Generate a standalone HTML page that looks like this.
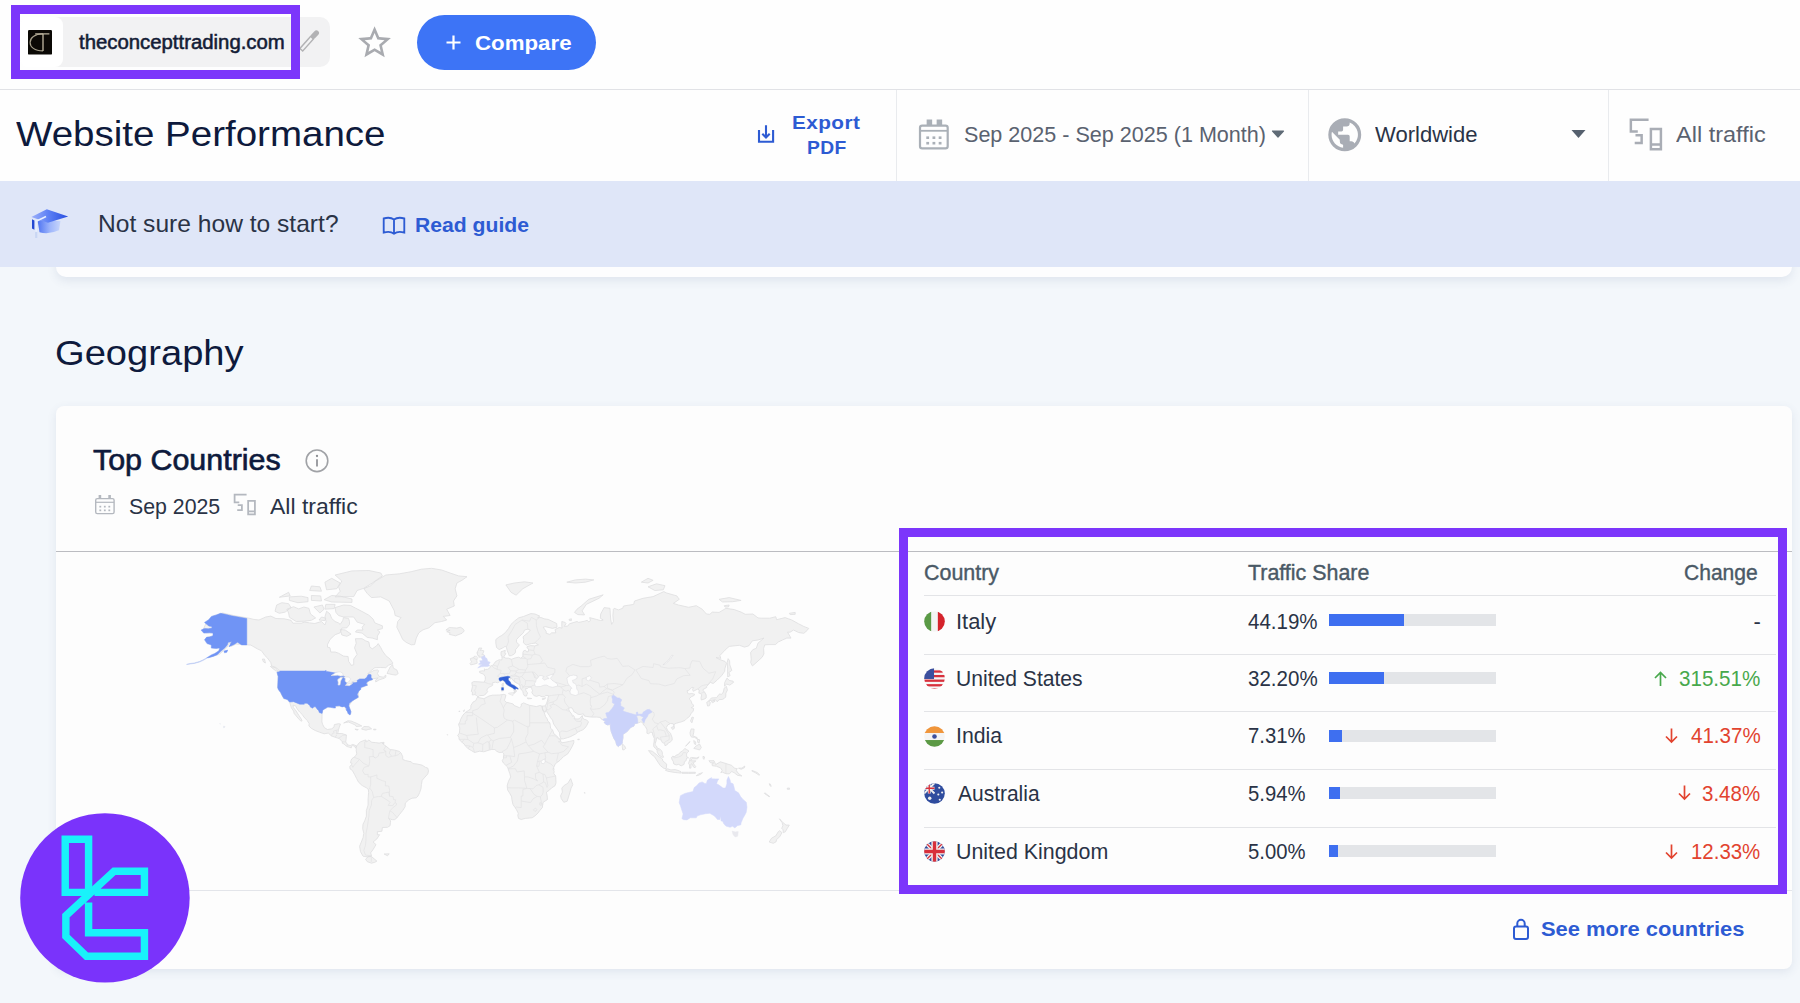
<!DOCTYPE html>
<html lang="en">
<head>
<meta charset="utf-8">
<title>Website Performance</title>
<style>
*{box-sizing:border-box;margin:0;padding:0}
html,body{width:1800px;height:1003px;overflow:hidden}
body{position:relative;background:#f3f7fb;font-family:"Liberation Sans",sans-serif;color:#1b2653}
.abs{position:absolute}
.t{position:absolute;white-space:nowrap;line-height:1;transform-origin:0 50%}
.t.r{transform-origin:100% 50%}
#topbar{left:0;top:0;width:1800px;height:90px;background:#fefefe;border-bottom:1px solid #e1e2e6}
#bar2{left:0;top:90px;width:1800px;height:91px;background:#fefefe}
.vd{position:absolute;top:90px;width:1px;height:91px;background:#e9ebee}
#banner{left:0;top:181px;width:1800px;height:86px;background:#dfe6f8}
#prevcard{left:56px;top:250px;width:1736px;height:27px;background:#fdfdfe;border-radius:0 0 10px 10px;box-shadow:0 4px 10px rgba(60,80,130,.10)}
#card{left:56px;top:406px;width:1736px;height:563px;background:#fdfdfd;border-radius:8px;box-shadow:0 3px 10px rgba(60,80,130,.10)}
.hl{position:absolute;height:1px}
.purple{position:absolute;border:9px solid #7c36fb}
.th{font-size:22px;color:#4a5966;-webkit-text-stroke:0.4px #4a5966}
.td{font-size:22px;color:#2a3346}
.td.red{color:#e2432f}.td.green{color:#48a84c}
.bar{position:absolute;left:1329px;width:167px;height:12px;background:#e3e5e8}
.bar i{position:absolute;left:0;top:0;height:12px;background:#3e6ff0;display:block}
.chg{position:absolute;right:41px;white-space:nowrap;line-height:1;font-size:22px}
.red{color:#e2432f}.green{color:#48a84c}
</style>
<style id="fit"></style>
</head>
<body>
<!-- top bar -->
<div id="topbar" class="abs"></div>
<div id="bar2" class="abs"></div>
<div class="vd" style="left:896px"></div>
<div class="vd" style="left:1308px"></div>
<div class="vd" style="left:1608px"></div>
<div id="prevcard" class="abs"></div>
<div id="banner" class="abs"></div>
<div id="card" class="abs"></div>

<!-- domain pill -->
<div class="abs" style="left:20px;top:17px;width:310px;height:50px;background:#f2f2f3;border-radius:10px"></div>
<div class="abs" style="left:20px;top:17px;width:43px;height:50px;background:#fff;border-radius:8px"></div>
<svg class="abs" style="left:28px;top:30.100px" width="24" height="24.600" viewBox="0 0 24 24.600"><rect width="24" height="24.600" rx="1.200" fill="#0b0905"/><path d="M15 3.900C6.500 3.900 2.100 8 2.100 12.400C2.100 17 6.500 20.900 15 20.900" fill="none" stroke="#a69f8a" stroke-width="1.150"/><path d="M7.200 3.900H21.400M15 3.900V21" fill="none" stroke="#bcb49e" stroke-width="1.350"/></svg>
<div class="t" id="domain" style="left:78.53px;top:31.50px;font-size:20px;-webkit-text-stroke:0.55px #141c36;color:#141c36;transform:scaleX(1.0169)">theconcepttrading.com</div>
<svg class="abs" style="left:296px;top:28px" width="28" height="28" viewBox="296 28 28 28"><path d="M300.800 50.300L312.400 37.300" stroke="#b2b2b4" stroke-width="5.200" stroke-linecap="butt"/><path d="M301.800 49.200L312 37.700" stroke="#f3f3f4" stroke-width="2.400"/><path d="M313.300 36.300L316.400 32.900" stroke="#b2b2b4" stroke-width="5.200" stroke-linecap="round"/></svg>
<div class="purple" style="left:11px;top:5px;width:289px;height:74px"></div>
<svg class="abs" style="left:354.800px;top:23.400px" width="39.200" height="39.200" viewBox="0 0 24 24"><path fill="#a9abb0" d="m12 15.39-3.76 2.27.99-4.28-3.32-2.88 4.38-.37L12 6.09l1.71 4.04 4.38.37-3.32 2.88.99 4.28M22 9.24l-7.19-.61L12 2 9.19 8.63 2 9.24l5.45 4.73L5.82 21 12 17.27 18.18 21l-1.64-7.03z"/></svg>
<div class="abs" style="left:417px;top:15px;width:179px;height:55px;border-radius:28px;background:#3d74f6"></div>
<svg class="abs" style="left:445px;top:34px" width="17" height="17" viewBox="0 0 17 17"><path d="M8.5 1.5V15.5M1.5 8.5H15.5" stroke="#fff" stroke-width="2.2" fill="none"/></svg>
<div class="t" id="compare" style="left:475.27px;top:32.00px;font-size:21px;font-weight:bold;color:#fff;transform:scaleX(1.0603)">Compare</div>

<!-- second bar -->
<div class="t" id="title" style="left:16.12px;top:117.25px;font-size:35.500px;color:#0e1a3c;transform:scaleX(1.0845)">Website Performance</div>
<svg class="abs" style="left:754px;top:122px" width="24" height="24" viewBox="754 122 24 24"><path d="M759 130V141.700H773.100V130M766 125.300V137.500M762.300 133.800L766 137.600L769.700 133.800" fill="none" stroke="#2d5bd3" stroke-width="2.100"/></svg>
<div class="t" id="exp1" style="left:792.40px;top:113.10px;font-size:19px;letter-spacing:0.400px;font-weight:bold;color:#2d5bd3;transform:scaleX(1.0922)">Export</div>
<div class="t" id="exp2" style="left:807.41px;top:137.60px;font-size:19px;letter-spacing:0.400px;font-weight:bold;color:#2d5bd3;transform:scaleX(1.0127)">PDF</div>
<svg class="abs" style="left:915px;top:116px" width="38" height="38" viewBox="915 116 38 38"><rect x="920" y="125.600" width="27.700" height="22.800" rx="2.200" fill="none" stroke="#aab0b7" stroke-width="2.200"/><path d="M920 130.800H947.700" stroke="#aab0b7" stroke-width="1.800"/><path d="M929.400 119.400V125M939.400 119.400V125" stroke="#aab0b7" stroke-width="5.500"/><g fill="#aab0b7"><rect x="926.300" y="136.400" width="2.800" height="2.600"/><rect x="932.500" y="136.400" width="2.800" height="2.600"/><rect x="938.700" y="136.400" width="2.800" height="2.600"/><rect x="926.300" y="141.900" width="2.800" height="2.600"/><rect x="932.500" y="141.900" width="2.800" height="2.600"/><rect x="938.700" y="141.900" width="2.800" height="2.600"/></g></svg>
<div class="t" id="daterange" style="left:964.20px;top:123.50px;font-size:22px;color:#5a6270;transform:scaleX(0.9799)">Sep 2025 - Sep 2025 (1 Month)</div>
<svg class="abs" style="left:1271px;top:130px" width="14" height="8" viewBox="0 0 14 8"><path d="M1.500 1H12.500L7 7z" fill="#5f6b76" stroke="#5f6b76" stroke-width="1.200" stroke-linejoin="round"/></svg>
<svg class="abs" style="left:1325.250px;top:114.750px" width="39.500" height="39.500" viewBox="0 0 24 24"><path fill="#a9adb5" d="M17.9 17.39c-.26-.8-1.01-1.39-1.9-1.39h-1v-3a1 1 0 0 0-1-1H8v-2h2a1 1 0 0 0 1-1V7h2a2 2 0 0 0 2-2v-.41a7.984 7.984 0 0 1 2.9 12.8M11 19.93c-3.950-.49-7-3.850-7-7.930 0-.62.080-1.220.21-1.790L9 15v1a2 2 0 0 0 2 2m1-16A10 10 0 0 0 2 12a10 10 0 0 0 10 10 10 10 0 0 0 10-10A10 10 0 0 0 12 2"/></svg>
<div class="t" id="worldwide" style="left:1375.41px;top:123.50px;font-size:22px;color:#2a3346;transform:scaleX(1.0023)">Worldwide</div>
<svg class="abs" style="left:1571px;top:130px" width="15" height="8" viewBox="0 0 14 8"><path d="M0 0H14L7 8z" fill="#55606e"/></svg>
<svg class="abs dev" style="left:1627px;top:116px" width="37" height="37" viewBox="0 0 24 24"><path fill="none" stroke="#a9adb5" stroke-width="1.6" d="M14 2.5H2.5V10H7M5 17.5H9.500V12.500H5.500M15.500 8.500H22V21.500H15.500ZM15.500 18.500H22"/></svg>
<div class="t" id="alltraffic" style="left:1676.14px;top:123.50px;font-size:22px;color:#5a6270;transform:scaleX(1.0677)">All traffic</div>

<!-- banner -->
<svg class="abs" style="left:24px;top:200px" width="52" height="44" viewBox="0 0 52 44"><defs><linearGradient id="gc1" x1="0" y1="0" x2="1" y2="0"><stop offset="0" stop-color="#9db0fa"/><stop offset="0.45" stop-color="#5f82f5"/><stop offset="1" stop-color="#284de0"/></linearGradient><linearGradient id="gc2" x1="0" y1="0" x2="1" y2="0"><stop offset="0" stop-color="#4f74f2"/><stop offset="0.55" stop-color="#9fb6fb"/><stop offset="1" stop-color="#c6d5fb"/></linearGradient></defs><path d="M13.500 20L36.500 21L35 30.300Q25 34.800 15.500 32.300Z" fill="url(#gc2)"/><path d="M7.400 16.900L22.800 9.300L44.200 16.400L23.900 22.800Z" fill="url(#gc1)"/><path d="M8 19.300L10.400 20.400V29.800L8 28.600Z" fill="#2348d2"/><path d="M22 16.500L12.200 21.300V31.500" fill="none" stroke="#e6efff" stroke-width="1.600"/><path d="M12.200 32V38" stroke="#c9d6f3" stroke-width="2.200"/></svg>
<div class="t" id="notsure" style="left:97.57px;top:212.00px;font-size:24px;color:#2a3346;transform:scaleX(1.0247)">Not sure how to start?</div>
<svg class="abs" style="left:381px;top:212px" width="26" height="26" viewBox="0 0 24 24"><path fill="none" stroke="#2d5bd3" stroke-width="1.7" d="M12 7C10 5.500 6 5 2.500 6V19C6 18 10 18.500 12 20C14 18.500 18 18 21.500 19V6C18 5 14 5.500 12 7ZM12 7V20"/></svg>
<div class="t" id="readguide" style="left:415.08px;top:214.60px;font-size:20.500px;font-weight:bold;color:#2d5bd3;transform:scaleX(1.0320)">Read guide</div>

<!-- section title -->
<div class="t" id="geo" style="left:54.88px;top:336.15px;font-size:35.500px;color:#0e1a3c;transform:scaleX(1.0737)">Geography</div>

<!-- card content -->
<div class="t" id="topc" style="left:93.03px;top:444.60px;font-size:29.500px;-webkit-text-stroke:0.65px #0e1a3c;color:#0e1a3c;transform:scaleX(1.0309)">Top Countries</div>
<svg class="abs" style="left:303px;top:447px" width="28" height="28" viewBox="303 447 28 28"><circle cx="317" cy="460.800" r="10.800" fill="none" stroke="#a0a2a6" stroke-width="1.600"/><path d="M317 459.300V466.400" stroke="#8c8e93" stroke-width="1.700"/><circle cx="317" cy="456" r="1.150" fill="#8c8e93"/></svg>
<svg class="abs" style="left:92px;top:491px" width="26" height="26" viewBox="92 491 26 26"><rect x="95.700" y="498.600" width="18.400" height="15" rx="1.600" fill="none" stroke="#b4b8bf" stroke-width="1.400"/><path d="M95.700 502.300H114.100" stroke="#b4b8bf" stroke-width="1.200"/><path d="M99.900 495V498.600M109.600 495V498.600" stroke="#b4b8bf" stroke-width="2.600"/><g fill="#b4b8bf"><rect x="99.400" y="505.800" width="1.800" height="1.700"/><rect x="103.900" y="505.800" width="1.800" height="1.700"/><rect x="108.400" y="505.800" width="1.800" height="1.700"/><rect x="99.400" y="509.500" width="1.800" height="1.700"/><rect x="103.900" y="509.500" width="1.800" height="1.700"/><rect x="108.400" y="509.500" width="1.800" height="1.700"/></g></svg>
<div class="t" id="sep" style="left:128.70px;top:496.00px;font-size:22px;color:#2a3346;transform:scaleX(0.9682)">Sep 2025</div>
<svg class="abs" style="left:232px;top:492px" width="25" height="25" viewBox="0 0 24 24"><path fill="none" stroke="#b4b8bf" stroke-width="1.700" d="M14 2.500H2.500V10H7M5 17.500H9.500V12.500H5.500M15.500 8.500H22V21.500H15.500ZM15.500 18.500H22"/></svg>
<div class="t" id="allt2" style="left:270.02px;top:496.00px;font-size:22px;color:#2a3346;transform:scaleX(1.0440)">All traffic</div>
<div class="hl" style="left:56px;top:551px;width:1736px;background:#bbbcc1"></div>
<div class="hl" style="left:56px;top:890px;width:1736px;background:#e3e5ea"></div>

<!-- MAP -->
<!--MAPSTART-->
<svg class="abs" style="left:0;top:0" width="1800" height="1003" viewBox="0 0 1800 1003">
<path d="M203.1 629.8L206.5 622.1L213.4 616.1L222.6 613.0L233.6 615.5L248.8 618.2L253.9 619.4L259.0 620.0L265.7 617.0L270.8 616.1L275.9 618.5L284.3 618.8L291.1 620.3L292.8 623.2L301.2 623.2L304.6 622.1L309.7 622.9L314.8 623.5L321.5 621.5L324.9 625.0L326.1 621.5L324.9 617.0L326.6 611.2L330.0 614.0L331.7 618.5L335.1 621.5L338.5 622.9L340.2 624.4L342.7 620.6L343.5 617.6L348.6 618.5L349.5 621.5L349.5 624.4L346.9 627.8L341.8 628.1L340.2 632.8L335.1 634.7L330.0 639.5L327.5 644.6L327.5 647.1L330.0 647.8L330.8 652.0L335.1 652.0L338.5 653.2L343.5 656.1L348.1 656.5L348.6 661.4L350.3 663.7L351.1 665.3L353.7 664.8L353.7 659.1L357.1 654.4L354.5 647.8L356.2 643.3L355.4 638.7L362.1 638.7L365.5 640.8L368.9 642.0L369.8 647.1L372.3 648.8L376.5 645.9L378.2 643.6L380.8 647.6L382.4 650.8L385.8 655.6L390.1 659.1L392.6 662.6L392.6 663.7L388.4 665.3L385.8 667.7L380.8 667.5L374.8 667.7L371.4 670.4L367.4 674.0L374.0 670.4L377.4 669.9L378.7 670.8L377.4 673.6L379.1 676.4L383.3 677.2L385.8 675.1L385.8 677.2L384.1 678.3L379.1 679.9L375.7 682.0L375.7 679.9L378.2 677.9L372.4 678.9L372.4 679.7L367.1 681.9L367.4 685.3L360.8 687.4L358.3 692.2L358.3 697.3L352.6 700.7L348.8 705.9L350.9 711.6L350.1 714.8L346.3 709.9L344.3 706.4L336.0 706.1L327.8 707.1L322.8 709.9L322.1 713.4L321.9 721.9L322.7 724.6L324.4 727.7L327.5 729.5L331.7 728.8L333.9 727.2L334.4 724.6L338.5 723.7L340.5 724.0L339.3 727.2L338.5 729.8L338.0 732.4L336.9 733.5L341.8 733.5L346.4 735.0L346.1 739.3L345.7 741.9L347.8 744.9L350.3 745.5L352.8 744.4L356.2 745.7L356.6 746.0L355.7 748.1L354.5 746.3L352.8 745.5L351.5 746.5L351.3 747.9L349.5 747.3L347.3 746.6L345.9 745.8L343.9 743.9L342.4 743.3L342.2 741.7L339.3 738.5L337.6 738.1L334.2 736.9L331.4 735.9L328.3 733.1L324.1 733.8L319.9 732.3L315.6 730.7L311.4 728.4L308.9 726.0L309.2 723.7L307.2 720.5L303.8 716.9L302.1 714.3L299.6 712.0L297.0 708.7L295.8 706.1L293.1 705.1L293.3 707.4L296.2 711.1L299.0 715.6L301.2 718.9L302.1 720.8L300.9 721.2L297.9 718.0L294.1 713.4L293.6 711.1L291.4 707.9L289.6 702.1L287.3 699.4L283.8 698.5L281.7 694.7L280.7 692.6L277.7 687.7L278.2 676.6L277.0 672.2L279.6 670.4L278.9 669.9L275.9 667.5L271.6 665.9L270.8 662.6L267.4 657.9L264.9 655.6L261.5 650.8L257.3 648.8L250.8 645.1L243.7 644.6L236.1 644.1L231.0 646.4L230.2 642.0L226.8 647.6L219.2 654.4L208.5 657.7L216.7 653.2L221.7 647.6L213.3 647.8L213.3 644.6L207.4 640.8L208.7 636.8L215.0 635.5L215.0 632.8L205.7 632.8ZM477.9 697.0L476.5 695.4L474.8 694.6L472.3 695.0L472.4 692.1L471.3 691.5L472.4 686.7L471.8 682.6L473.8 681.6L478.0 681.8L484.3 682.2L485.3 679.5L485.3 676.8L483.6 674.2L479.7 672.7L479.4 671.4L482.3 670.8L484.6 671.0L484.3 668.8L485.5 669.5L487.7 669.3L489.9 667.9L490.2 666.2L493.3 665.0L494.1 663.7L495.5 661.6L497.5 660.5L499.2 659.8L501.7 660.0L502.0 658.4L501.9 655.8L501.0 655.4L501.0 651.8L505.3 650.3L504.8 653.2L505.8 653.7L504.1 656.3L503.9 657.2L505.9 658.2L508.5 658.2L511.4 659.3L515.2 657.9L518.6 657.2L520.8 658.2L522.9 656.3L522.9 652.5L523.7 650.8L525.6 650.3L526.7 652.0L528.4 651.5L528.6 648.8L527.1 648.1L527.1 646.6L530.5 645.6L534.7 645.9L538.4 644.8L535.5 643.1L531.3 643.6L526.1 645.1L523.4 642.8L523.7 639.5L523.0 636.8L528.8 632.0L530.3 630.0L527.9 629.2L524.5 630.0L523.4 632.8L519.5 636.3L516.6 639.5L516.4 642.0L518.6 644.3L519.3 644.8L517.6 647.3L515.4 649.8L515.6 652.0L514.4 653.9L511.5 655.6L509.2 655.8L508.6 653.9L507.3 650.8L506.3 647.1L505.1 646.4L503.4 647.6L499.2 649.6L496.6 647.6L495.8 643.3L495.8 639.5L499.2 636.8L501.7 635.5L505.1 632.8L508.5 628.6L511.0 624.4L514.4 621.2L518.6 617.9L523.7 616.4L530.8 613.6L535.0 614.0L539.8 616.1L537.7 617.6L541.5 617.6L544.0 618.8L548.2 619.4L556.7 623.5L557.0 627.2L552.5 628.4L545.7 626.7L543.2 627.2L546.2 631.4L546.2 633.3L549.9 634.4L551.6 632.8L555.8 632.8L555.0 629.5L559.2 627.5L562.1 628.1L561.8 625.8L561.8 621.5L565.1 622.4L566.0 623.5L564.3 626.4L567.7 626.1L569.4 623.8L577.0 621.5L578.7 622.4L584.6 621.2L587.1 620.3L588.8 621.8L590.5 620.6L589.7 617.6L596.4 619.4L600.7 620.6L603.2 620.0L600.3 618.2L600.7 614.0L604.1 607.6L610.0 608.3L610.3 614.0L610.8 620.0L611.7 624.4L613.4 621.5L612.9 615.5L613.4 609.2L614.2 608.3L618.4 609.9L622.7 608.3L623.5 606.0L633.7 604.4L634.5 601.0L643.0 598.3L653.1 596.6L663.8 591.6L666.7 593.0L676.8 595.9L679.3 599.3L673.4 603.4L678.5 605.0L688.6 607.3L696.3 605.7L702.2 609.2L706.4 614.0L709.8 614.3L712.3 612.1L719.1 612.4L723.3 609.9L725.9 608.3L734.3 609.6L741.1 612.1L745.3 614.3L752.9 614.0L758.0 617.9L761.4 618.2L769.8 618.2L775.8 616.7L776.6 619.7L785.1 617.6L788.5 618.8L791.8 620.0L798.6 623.8L803.7 626.4L808.8 628.4L805.4 632.2L803.7 633.3L798.6 632.5L793.5 630.0L790.1 632.2L787.6 632.2L791.0 638.1L786.8 638.1L782.5 640.0L778.3 642.0L775.4 644.6L769.0 644.6L764.8 644.8L763.6 648.3L763.9 653.9L762.2 657.2L758.0 661.0L755.1 663.7L752.4 665.9L750.7 662.6L751.2 659.1L750.6 652.5L752.9 649.6L756.3 648.3L758.0 643.1L763.9 638.1L758.0 640.0L752.4 640.8L748.7 645.9L744.5 647.1L739.4 645.3L729.2 646.4L725.0 650.1L719.9 655.6L720.8 658.4L716.0 657.5L719.9 659.6L725.0 661.4L726.5 663.2L725.0 668.2L724.7 671.4L721.6 675.7L717.4 679.9L713.2 683.5L710.3 682.4L708.4 684.5L706.7 686.5L706.7 687.5L703.0 689.5L703.0 690.7L704.5 691.9L706.2 695.0L706.2 697.9L704.7 698.9L701.3 700.0L701.0 697.9L701.7 695.0L700.5 693.5L698.8 693.1L699.3 690.1L697.6 689.1L693.7 691.1L693.2 691.3L692.5 689.1L693.7 687.7L692.0 687.3L688.6 690.5L687.0 690.7L687.8 693.1L688.6 694.0L691.7 693.5L694.6 694.2L694.2 695.4L691.2 696.8L689.1 698.9L690.8 700.4L692.0 703.6L693.5 705.1L693.4 706.6L691.2 707.7L693.7 708.5L693.2 711.1L691.2 713.4L689.5 716.5L687.0 718.3L684.9 720.5L680.7 722.1L679.3 722.4L676.8 723.1L674.3 724.0L673.9 725.8L673.1 723.7L670.5 723.5L667.8 724.9L666.3 727.5L667.5 730.2L670.5 733.3L672.1 737.6L672.2 740.2L670.0 742.3L668.3 742.9L667.5 744.4L665.0 745.8L664.6 743.6L662.4 742.6L661.4 740.7L659.9 739.2L658.0 738.8L658.0 737.6L656.5 737.8L656.3 740.5L655.3 743.1L655.1 744.7L656.5 746.0L657.2 748.1L659.5 748.9L661.6 750.7L662.3 752.3L662.4 754.7L663.6 757.2L662.3 757.4L658.7 755.0L657.3 752.3L657.0 750.3L655.7 748.4L653.8 746.8L653.6 744.4L654.1 741.9L654.3 738.5L652.8 735.0L652.4 732.4L650.6 732.3L648.5 733.7L646.9 733.3L647.0 729.8L645.5 726.7L643.3 724.6L642.6 722.2L640.4 722.1L637.9 723.1L634.5 723.8L634.0 726.0L631.1 727.2L629.4 728.9L626.6 732.1L623.0 734.2L623.0 738.0L622.3 741.1L622.3 743.1L621.0 744.7L619.6 745.4L618.4 746.6L616.7 745.2L615.6 741.1L613.9 738.5L612.5 735.0L611.2 731.6L610.5 728.1L610.3 724.6L610.1 722.8L609.5 724.6L607.4 724.9L605.7 724.2L604.1 722.2L606.3 721.2L603.9 720.6L602.7 719.8L601.4 719.2L600.2 717.4L596.8 717.1L591.5 717.1L586.8 716.5L584.3 716.0L583.4 713.8L580.0 714.5L577.8 714.2L576.1 712.9L573.6 711.4L573.3 710.1L571.9 707.9L570.1 707.7L568.5 708.5L569.4 711.1L571.9 714.3L572.3 716.2L573.6 715.6L574.6 717.4L574.1 718.7L577.0 719.0L579.0 718.9L582.2 715.6L582.7 717.6L583.8 719.2L586.6 719.9L588.5 721.9L586.8 725.4L584.9 728.1L582.9 729.8L580.7 730.7L577.8 732.1L575.6 734.0L570.2 736.8L567.7 737.6L563.5 738.8L560.9 739.0L559.7 735.4L559.6 732.8L557.0 728.9L553.6 724.0L552.5 720.1L550.3 717.4L549.4 715.6L546.9 712.0L546.4 709.2L545.4 712.0L545.2 712.3L543.5 710.9L542.5 708.5L542.0 706.1L545.2 705.9L546.4 703.6L547.4 701.0L548.2 697.3L548.6 695.6L545.9 695.4L544.5 696.6L542.0 696.8L539.1 695.4L536.6 696.4L533.9 695.6L531.8 692.5L532.7 690.1L531.7 689.1L531.7 688.5L531.3 687.3L528.8 687.3L527.1 688.7L525.9 688.1L525.7 690.1L526.7 692.1L527.9 693.1L527.1 693.7L526.6 696.0L525.2 696.0L524.0 695.4L523.2 693.5L522.9 691.3L521.2 689.7L520.1 688.1L520.1 686.3L519.5 684.7L516.9 683.0L513.6 681.0L511.9 678.5L510.3 679.1L510.5 677.4L508.3 678.1L508.1 680.4L510.3 682.0L511.5 684.5L514.4 685.3L518.6 688.7L518.5 689.5L516.1 688.1L515.4 689.7L516.3 691.1L515.2 692.5L513.9 693.3L514.4 691.7L513.9 689.1L512.4 687.9L511.0 687.1L508.1 685.7L505.9 684.1L504.8 682.0L502.6 680.4L500.0 681.4L497.8 682.8L495.5 682.2L492.7 682.6L492.7 685.3L490.7 686.5L488.5 687.5L486.8 690.1L487.7 691.5L486.1 693.7L483.9 695.4L479.7 695.6ZM477.3 697.3L483.9 698.7L489.0 696.0L492.4 695.2L499.2 695.0L503.9 694.4L505.9 695.0L505.3 697.9L504.4 700.2L506.3 702.3L509.3 702.9L513.2 704.0L514.1 705.5L516.9 706.6L519.5 707.7L521.2 706.4L521.3 704.0L523.7 702.9L526.6 704.2L529.6 705.3L533.9 706.1L536.4 706.6L539.8 705.5L542.0 706.1L542.3 708.3L542.6 710.1L544.0 712.0L544.8 714.3L545.5 716.5L547.4 719.2L547.7 721.0L549.8 722.8L550.3 725.4L550.6 728.4L552.5 729.8L554.0 734.0L556.4 735.6L559.1 738.7L560.4 739.3L560.6 741.1L561.8 742.8L565.1 742.3L569.4 741.4L573.9 740.4L573.8 742.8L572.4 746.0L570.2 750.0L567.7 753.9L563.5 756.6L560.1 760.2L557.5 762.2L555.3 763.8L554.3 766.2L553.0 769.2L554.2 771.2L553.8 773.6L555.7 776.0L556.0 782.9L555.0 785.8L551.6 787.9L549.1 790.4L546.4 792.1L547.2 796.0L547.4 799.6L543.2 802.3L542.8 804.1L542.3 807.7L539.8 810.5L538.1 812.9L535.2 815.7L532.2 817.8L529.6 818.0L525.4 818.4L521.2 819.5L518.5 818.4L517.8 815.5L518.3 813.3L516.4 809.6L515.2 807.7L513.0 804.6L511.9 799.6L511.7 796.9L509.8 793.4L507.6 789.9L507.3 787.2L507.3 785.1L508.5 781.2L510.7 776.9L509.8 773.6L508.1 768.8L507.6 767.0L505.9 765.4L503.4 763.0L502.2 760.7L503.4 758.6L503.6 755.9L503.9 753.9L502.4 752.3L499.2 752.5L496.6 751.2L494.9 749.5L491.6 749.5L489.0 750.1L483.9 751.8L479.7 751.2L474.6 752.5L471.6 750.7L467.9 748.5L465.0 745.5L464.0 743.9L462.0 742.3L459.1 739.5L458.9 737.1L457.7 735.6L459.4 733.0L459.8 728.1L458.6 724.6L459.9 721.9L460.6 719.4L462.8 715.3L465.3 712.5L468.4 710.5L470.8 708.7L470.9 705.5L473.0 702.1L475.8 700.6ZM356.6 746.0L359.6 742.4L360.8 741.7L365.5 739.9L366.4 741.9L368.9 740.0L371.8 742.3L375.7 742.6L379.1 743.1L382.4 742.4L382.8 743.9L385.8 746.0L390.1 749.5L394.3 750.0L399.4 751.4L401.1 753.1L402.7 756.6L402.7 759.4L405.3 760.5L411.2 761.8L412.9 763.6L417.1 764.0L422.2 765.2L425.6 767.4L427.8 768.1L428.5 770.9L427.8 773.9L424.4 777.7L422.2 780.3L421.4 784.6L421.0 788.6L419.7 792.5L418.0 796.0L416.3 797.8L412.0 798.2L408.7 799.9L405.3 803.0L405.1 806.8L402.7 810.5L399.4 814.6L396.8 818.0L394.5 819.7L392.3 819.7L389.5 818.8L388.5 818.0L390.6 820.9L390.4 822.8L390.1 825.7L387.5 827.3L382.4 827.5L381.9 831.3L377.4 831.7L377.4 834.7L379.6 834.7L376.9 838.9L373.1 842.0L376.0 844.6L373.1 849.5L370.6 852.9L371.6 855.8L367.2 856.9L363.0 856.2L360.5 851.7L359.6 846.3L361.3 842.0L363.0 837.8L363.8 833.3L362.7 828.7L363.0 824.2L364.7 820.9L366.4 816.1L366.4 810.5L368.1 805.0L368.1 798.7L368.6 792.5L368.4 789.5L366.4 787.8L362.1 785.5L358.3 781.9L356.7 778.6L354.5 774.4L352.3 770.4L350.0 768.8L349.8 766.5L351.5 764.7L352.0 763.3L350.5 762.9L351.1 760.2L352.0 758.6L354.0 757.2L356.2 755.2L356.7 753.3L356.2 750.7L356.4 748.4L355.7 748.1ZM377.4 639.7L372.3 638.1L367.2 637.4L362.1 633.1L355.4 632.0L357.1 630.0L363.0 630.0L362.1 627.2L364.7 624.4L357.1 622.1L353.7 617.0L343.5 617.0L338.5 615.5L335.9 612.4L335.1 607.6L343.5 605.0L350.3 605.4L355.4 608.0L362.1 611.5L368.9 615.2L373.1 619.1L374.8 622.9L382.4 625.8L382.4 628.6L377.4 630.0L379.9 632.0L377.4 636.0ZM289.4 617.3L296.2 621.5L304.6 621.2L311.4 620.3L315.6 617.9L310.5 614.0L308.9 608.3L303.8 607.0L298.7 608.9L293.6 606.7L286.9 609.2L288.6 613.0ZM275.0 611.2L279.3 613.3L285.2 612.1L291.1 607.6L288.6 603.7L281.8 602.7L276.7 605.0ZM335.1 596.9L343.5 596.6L353.7 596.6L357.1 590.5L363.8 588.3L372.3 583.0L382.4 575.9L380.8 573.0L368.9 570.5L352.0 570.9L335.1 575.0L341.8 581.0L338.5 586.8L340.2 591.2ZM326.6 589.8L336.8 588.7L340.2 583.0L331.7 578.3L324.9 582.2ZM324.1 599.7L331.7 602.0L352.0 602.4L352.0 599.0L340.2 596.2L331.7 595.5ZM289.4 600.4L297.9 602.7L308.0 601.7L308.0 597.6L301.2 596.2L289.4 596.9ZM324.9 609.2L334.2 608.6L335.1 604.4L325.8 604.4ZM313.9 607.0L319.9 613.0L324.1 609.2L322.4 605.0ZM340.2 629.5L345.2 630.0L351.1 634.1L346.9 636.3L341.8 635.0ZM279.3 597.3L290.2 595.9L288.6 592.3ZM311.4 600.4L321.5 601.0L320.7 595.9L311.4 595.5ZM309.7 590.5L321.5 591.2L319.9 586.8L311.4 586.0ZM319.0 620.0L324.9 620.6L325.8 618.2L321.5 617.0ZM363.8 588.7L370.6 585.7L375.7 581.0L385.8 575.0L399.4 573.8L411.2 571.7L421.4 569.2L431.5 568.3L441.7 570.0L450.1 573.0L458.6 575.9L467.0 576.7L462.0 580.3L456.9 583.0L455.2 588.7L456.9 595.9L453.5 601.0L454.3 606.0L446.7 609.2L450.1 615.5L443.3 616.4L446.7 620.0L441.7 621.5L434.9 622.7L429.0 627.8L423.0 629.8L418.8 632.8L416.3 638.1L414.6 644.6L411.2 644.8L406.1 642.3L402.7 639.5L400.2 634.1L396.8 627.2L397.7 621.5L401.1 617.6L395.1 615.5L394.3 610.8L389.2 601.0L380.8 596.9L371.4 597.6L367.2 593.4ZM445.9 630.0L449.3 627.5L456.9 628.1L460.3 627.2L462.8 628.6L464.3 630.9L462.0 633.3L455.5 635.8L449.3 634.4L450.1 632.8L446.7 631.7L450.1 630.3ZM387.0 673.4L390.1 667.1L392.6 664.6L393.4 668.2L396.8 669.9L398.2 673.6L396.0 675.1L392.9 674.7ZM270.3 666.4L275.4 667.7L278.6 671.4L275.9 671.0ZM262.3 659.1L264.5 659.1L265.4 663.0L263.5 661.9ZM343.7 723.0L347.8 720.8L351.1 721.0L357.1 723.5L361.8 726.0L356.2 726.5L355.4 725.1L351.1 723.1L348.6 722.1L346.1 722.4ZM361.5 729.1L363.8 726.5L368.9 726.7L371.6 728.8L368.1 729.5L366.0 730.2ZM354.9 729.1L358.3 729.5L357.1 730.2ZM373.6 729.1L376.2 729.3L375.7 729.9L373.6 729.8ZM382.8 742.4L384.1 742.4L384.0 743.5L382.8 743.5ZM368.1 856.7L371.4 856.5L376.9 861.1L374.8 862.3L371.4 863.2L367.2 861.6L365.5 859.2ZM384.1 854.0L389.2 853.8L387.5 855.8ZM570.7 778.6L572.8 784.6L571.1 788.1L569.4 794.2L567.2 801.2L563.8 802.3L561.3 798.7L560.6 795.7L562.4 792.1L561.8 788.1L564.3 785.3L567.7 783.4ZM484.6 655.6L483.6 654.4L481.9 654.4L483.1 653.2L483.9 650.8L481.4 650.3L480.2 650.5L481.9 648.1L478.9 648.1L478.4 650.1L477.5 651.3L477.7 653.2L476.8 652.7L478.0 655.8L479.2 655.6L478.9 657.2L481.4 657.0L482.3 656.8ZM477.2 663.2L476.8 660.7L477.0 659.1L475.0 658.9L473.5 657.9L474.8 656.1L473.0 657.7L470.4 658.6L470.8 660.5L471.6 661.9L469.9 663.7L470.8 664.8L473.3 664.4L476.2 663.5ZM501.2 687.1L503.7 686.9L503.6 690.7L501.5 691.1ZM515.4 689.3L516.3 691.1L515.2 692.5L513.9 693.3L514.4 691.7L513.9 689.1L514.7 689.3ZM501.9 684.1L503.4 683.0L503.2 686.1L502.2 685.9ZM527.1 697.9L531.8 698.5L527.9 698.9ZM542.0 698.9L545.7 697.7L544.7 699.1L542.5 699.6ZM622.5 744.1L624.7 746.0L625.7 748.4L624.4 749.6L622.8 750.0L622.2 746.8ZM708.8 700.8L711.5 697.9L716.6 697.7L718.8 694.6L719.6 694.0L721.6 694.4L723.3 692.1L724.2 688.1L726.4 686.3L727.4 690.1L725.9 693.1L725.7 697.0L724.2 698.5L722.1 699.5L719.1 699.6L718.8 700.2L717.1 701.7L715.7 699.8L712.3 700.2ZM724.5 686.1L724.7 682.6L727.0 678.1L729.2 680.4L733.1 681.2L733.5 682.4L729.8 685.1L726.7 684.1ZM706.7 702.3L708.9 701.0L710.3 702.7L709.5 705.7L707.6 706.1ZM711.3 701.7L714.4 700.2L715.0 701.2L712.7 702.7ZM727.6 676.8L730.1 675.7L728.9 672.5L731.8 670.4L729.8 664.8L729.6 660.7L728.1 658.6L727.2 662.6L727.6 668.2ZM692.0 717.1L693.5 717.4L691.9 722.8L690.5 721.0ZM671.2 727.5L674.3 726.3L674.3 728.4L672.6 729.5ZM691.2 728.9L694.1 729.1L693.7 732.8L692.9 735.9L697.1 737.6L697.3 739.2L694.6 737.3L691.5 737.1L690.3 735.0L690.0 732.8ZM693.7 748.4L696.3 745.8L699.6 744.1L701.3 747.6L699.6 750.0L697.1 749.2ZM697.6 739.3L699.6 739.7L699.1 743.1L697.6 742.3ZM693.7 740.5L695.7 741.9L695.7 744.7L694.4 743.9ZM685.6 746.2L689.5 742.6L689.8 741.4L687.0 744.7ZM671.7 757.0L672.7 756.3L675.1 756.7L675.8 755.3L678.5 754.4L680.2 752.3L682.7 750.7L684.9 748.5L686.4 749.3L689.0 751.1L687.3 752.6L686.6 753.9L686.6 756.6L688.6 757.8L686.6 758.1L686.1 760.7L684.4 761.8L684.1 764.4L681.2 765.8L678.5 764.4L676.3 764.9L673.8 764.0L673.2 761.4L671.7 758.9ZM648.5 750.6L652.3 751.2L657.0 755.0L657.9 755.9L662.4 758.9L662.9 761.0L666.7 764.1L666.3 768.5L664.1 768.5L660.4 765.7L657.2 761.0L654.5 756.7L651.4 754.4ZM665.3 770.1L667.5 768.8L670.9 769.9L675.1 769.6L678.0 770.4L681.0 771.7L680.9 773.1L675.1 772.5L670.0 771.7L667.3 771.1ZM681.9 772.3L688.6 772.3L695.4 772.3L695.4 773.3L688.6 773.4L681.9 773.3ZM696.3 775.7L698.8 773.9L702.5 772.6L701.3 773.9L697.9 775.5ZM690.0 758.1L691.7 757.4L696.3 758.0L699.1 756.9L697.6 758.8L692.0 758.8L690.7 760.8L693.2 760.8L695.9 760.8L695.1 761.9L692.9 762.4L694.2 764.6L695.7 766.5L695.1 767.7L693.4 767.0L692.0 763.8L691.0 764.0L691.0 768.1L689.5 768.1L689.5 764.9L688.5 763.6L689.8 759.7ZM703.0 756.3L704.7 757.0L703.9 759.4L703.0 758.1ZM708.9 760.7L714.0 760.7L715.7 764.6L720.4 761.8L725.9 763.5L731.8 765.4L734.3 768.1L737.4 768.8L736.0 770.1L738.5 773.6L741.9 776.0L737.4 775.3L734.3 772.8L731.8 771.5L729.2 773.9L725.9 773.7L722.5 772.2L720.8 772.6L722.1 770.4L720.8 768.1L716.6 766.3L712.3 765.7L712.0 764.1L713.7 762.9L710.6 762.9ZM738.5 768.2L741.9 768.1L744.8 766.0L744.5 767.7L741.1 769.3ZM752.1 770.4L757.2 772.5L759.7 774.9L758.8 775.0L755.5 772.8L751.7 770.9ZM764.8 792.8L769.8 796.6L769.0 796.7L764.4 793.4ZM769.2 783.8L770.4 784.1L771.2 786.4L770.2 786.0ZM787.3 788.1L789.5 788.1L789.5 789.3L787.3 789.3ZM779.5 818.8L782.5 822.2L784.7 823.8L785.9 825.1L789.3 825.1L787.1 828.7L785.4 831.7L783.4 832.7L783.0 829.7L781.7 828.3L782.9 825.7L782.2 822.8ZM779.7 830.7L782.0 832.7L779.7 836.8L776.6 839.5L776.1 841.8L773.2 843.3L769.2 842.0L771.5 838.2L775.8 835.8L778.3 831.7ZM574.5 612.4L577.0 609.2L581.2 606.0L588.8 599.3L603.2 594.8L599.0 598.3L586.3 604.4L582.1 610.8L584.6 614.9L577.8 614.6ZM505.9 584.9L514.4 583.0L524.5 581.8L533.0 583.0L522.9 588.7L516.1 595.2L511.0 592.3ZM648.0 586.8L656.5 583.8L665.0 585.7L663.3 589.8L654.8 590.5ZM641.3 582.2L648.0 578.3L653.1 580.3L648.0 583.0ZM566.8 582.2L575.3 579.9L585.4 579.1L593.9 579.9L585.4 582.2L575.3 583.0ZM719.1 599.3L729.2 597.6L741.1 600.4L732.6 601.7L722.5 602.0ZM724.2 605.7L729.2 605.0L728.4 607.0L725.0 607.0ZM789.3 613.3L795.2 612.4L795.2 614.3L790.1 614.6ZM569.0 619.4L571.4 618.8L571.4 620.6L569.4 620.6ZM577.7 739.2L579.5 739.2L579.2 739.7L577.8 739.7ZM553.6 768.5L554.2 768.8L554.0 769.5ZM584.4 792.5L585.1 792.8L584.8 793.4ZM458.9 711.2L459.9 711.1L459.4 712.0ZM463.3 710.9L464.5 709.8L463.8 711.6ZM447.1 734.7L447.7 734.7L447.6 735.2Z" fill="#f1f1f1" stroke="#dedee0" stroke-width="0.8" stroke-linejoin="round"/>
<path d="M331.4 735.9L332.5 733.3L334.2 733.1L333.4 731.2L336.4 730.2L338.0 729.8M336.4 730.2L336.4 733.5L336.9 733.5M334.9 737.1L336.3 736.1L336.4 734.7M338.8 738.0L340.7 737.1L342.2 735.4L346.4 735.0M342.2 741.7L344.0 741.9L345.7 741.9M347.1 746.6L347.3 744.4M400.2 752.8L398.5 754.7L395.1 755.8L391.7 756.3L388.4 757.4L385.8 755.5L385.8 751.2L383.3 752.6L379.1 753.0L378.2 756.3L375.2 758.1L374.0 756.6L369.2 756.7L369.8 761.0L368.9 766.0L364.2 767.3L362.5 770.9L364.7 774.4L368.1 774.4L368.1 776.9L371.1 776.9L376.9 774.9L376.9 778.3L382.4 780.7L385.5 781.5L385.3 785.8L388.7 786.0L389.2 788.1L389.7 790.7L389.2 792.8L389.5 796.2L393.1 796.7L393.6 799.6L395.5 799.8L395.0 802.5L396.5 803.5L396.3 805.2L393.1 807.4L389.9 810.9L392.6 812.4L396.8 817.4M373.6 797.4L371.6 800.5L371.4 805.0L369.2 810.5L368.9 816.1L368.1 821.8L367.2 827.7L366.0 833.7L366.0 839.9L365.5 845.2L363.8 850.6L365.5 855.1L371.4 855.8M371.3 856.7L371.3 861.8M370.6 776.9L370.6 779.5L370.6 784.6L369.8 788.1L368.4 789.5M369.8 788.1L372.3 791.6L373.6 797.4L378.2 796.6L381.3 796.4L382.4 793.4L388.9 792.1L389.5 796.2M381.3 796.4L389.2 801.4L390.1 802.3L388.2 805.4L392.6 805.7L395.0 802.5M389.9 810.9L388.9 815.2L388.5 818.0M366.7 740.5L364.7 741.9L364.7 747.6L368.9 748.4L373.1 749.6L373.1 756.3L375.2 758.1M354.0 757.2L359.6 759.4L359.9 759.7L363.0 763.0L368.9 766.0M351.5 764.7L352.8 767.3L354.5 764.9L359.6 759.4M385.8 746.0L383.6 750.0L385.8 751.2M390.6 750.0L389.2 753.1L391.7 756.3M396.0 750.3L395.1 755.8M472.4 685.3L476.3 685.7L475.7 688.7L474.6 690.1L475.5 692.7L474.8 694.6M484.3 682.2L488.5 683.7L492.7 684.3M491.6 665.7L494.4 668.2L497.1 669.3L501.2 670.4L500.2 673.4L497.5 676.2L499.2 677.0M499.5 661.0L498.8 663.7L497.5 666.4L497.1 669.3M493.1 665.0L497.5 666.4M511.4 659.3L512.2 663.7L512.7 665.9L508.0 667.5L510.7 670.8L509.3 673.6L504.2 673.8L503.6 673.6L500.2 673.4M503.6 673.6L504.9 675.5M501.9 657.0L503.9 657.2M520.8 658.2L525.9 658.4L527.1 659.3L527.3 662.3L527.9 666.4L525.6 670.1L519.5 669.5L512.7 665.9M510.7 670.8L516.1 671.0L519.1 669.3M516.1 672.5L514.7 674.9L519.1 677.0L521.7 676.6L524.7 672.5L525.6 670.1M516.1 671.0L516.1 672.5L519.1 673.0L524.7 672.5M510.5 675.7L514.7 674.9M510.5 677.4L513.6 676.4L515.2 676.0L519.1 677.0L519.5 679.1L514.4 678.5L514.4 682.0L517.1 683.2M519.5 679.1L520.3 682.0L519.5 684.7M521.7 676.6L525.7 680.6L525.2 684.5L522.9 687.3L521.2 689.7M520.1 685.3L522.0 684.5L522.9 687.3M524.7 672.5L532.3 671.9L535.0 677.9L537.6 678.3M525.7 680.6L533.0 680.8L535.7 681.6M522.9 687.3L526.2 686.5L531.3 686.5L532.0 685.7L534.7 685.1M532.0 685.7L531.3 687.3M506.3 647.1L508.5 642.0L508.0 636.8L511.9 630.6L515.2 624.4L522.0 620.0L527.4 623.2L527.9 629.2M534.4 643.3L538.1 639.5L540.6 637.1L538.1 632.0L536.4 625.8L536.2 620.0L539.4 617.6M522.0 620.0L529.6 621.2L531.3 617.3L536.2 620.0M534.7 645.9L533.7 650.5L535.0 654.2L539.6 655.4L542.6 660.5L540.3 663.5L544.8 663.0L547.6 667.3L555.0 669.0L554.7 673.0L552.0 674.5M528.4 649.8L533.7 650.5M522.9 654.2L532.3 655.1L535.0 654.2M532.3 655.1L531.0 658.6L527.1 659.3M527.3 664.6L540.3 663.5M525.9 658.4L522.9 656.3M532.3 671.9L534.7 672.5L538.1 676.2L538.4 677.2M535.0 677.9L535.0 675.5L532.3 671.9M555.0 682.2L561.4 683.9L566.0 685.5L569.4 685.5M557.5 686.1L560.9 686.9L563.5 686.5L566.0 685.5M560.9 686.9L563.1 689.7L566.0 691.3L568.5 690.1L570.1 692.3M563.1 689.7L562.3 693.3L563.1 694.6M548.6 696.0L551.6 695.4L558.9 694.6L563.1 694.6M559.7 732.6L561.8 730.9L566.8 731.6L575.3 728.1L577.2 732.1M575.3 728.1L580.4 726.3L581.6 722.8L580.7 721.5L576.3 721.2L574.6 718.9M580.7 721.5L582.2 718.0L582.2 715.6M568.0 711.1L566.0 710.0L562.9 709.8L555.7 704.8L553.3 704.2L549.9 705.5L551.6 707.4L548.4 709.8L546.4 709.2M553.3 704.2L553.0 701.9L556.7 700.0L558.9 694.6M569.4 708.3L568.0 706.4L565.1 702.7L564.1 698.9L565.5 697.5L563.1 694.6M545.2 705.9L546.4 709.2M547.4 702.5L547.6 703.8L547.4 705.5L546.5 709.0M547.7 703.3L553.0 701.9M548.2 699.6L549.2 700.4L547.9 702.1M568.0 711.1L569.2 711.1M566.0 710.0L568.4 708.3M569.4 675.5L566.8 672.5L566.0 671.4L566.8 667.5L572.8 664.4L580.4 666.6L588.5 666.6L591.4 665.9L590.5 660.3L597.3 657.9L604.1 656.1L607.4 658.6L611.7 659.1L617.3 658.4L622.7 666.4L628.6 665.9L635.0 669.9M635.0 669.9L632.0 674.7L626.9 678.3L623.0 684.7M623.0 684.7L614.2 683.5L607.4 684.1L604.1 686.5L599.8 687.1L599.0 683.0L590.5 680.4L586.3 677.6L582.1 678.9L582.1 686.5L578.7 685.1L576.1 685.7M578.5 694.4L583.8 692.7L590.9 695.8M590.9 695.8L590.2 700.8L590.5 705.5L591.9 705.9L590.4 708.7L593.9 713.8L591.5 717.1M590.9 697.7L596.4 696.0L599.8 694.2L607.4 692.1L614.0 694.6M613.4 695.0L608.3 696.6L607.4 700.8L604.6 704.8L599.7 708.5L593.1 709.4L590.4 708.7M582.1 686.5L586.3 684.1L590.5 686.7L593.1 689.1L599.8 694.2M604.1 686.5L606.6 688.7L612.2 690.1M607.4 684.1L607.4 688.1L612.2 690.1M599.8 694.2L602.4 691.5L606.6 688.7M635.9 669.9L641.3 678.5L648.9 680.6L650.4 683.7L659.0 684.1L665.0 685.9L674.3 683.5L676.8 678.9L683.6 675.7L690.2 675.3L684.8 668.6M635.9 669.9L643.0 666.4L653.1 667.5L653.6 663.7L660.2 665.3L660.4 666.8L668.3 668.2L680.2 667.7L684.8 668.6M684.8 668.6L690.0 667.9L690.3 664.8L692.0 660.7L699.6 661.4L703.0 668.2L708.9 673.2L715.7 671.7L712.7 678.9L709.3 682.6L708.4 684.5M708.4 684.5L703.9 685.1L701.3 686.1L697.6 689.1M700.5 693.5L704.5 691.9M670.0 723.7L665.5 720.5L660.2 722.1L658.5 723.7L654.8 722.8L652.3 719.2L654.3 715.6L654.0 712.9L651.9 711.4M613.4 695.0L614.2 692.1L612.2 690.1L615.9 688.3L623.0 684.7M656.7 725.8L652.8 728.9L654.0 732.8L655.1 738.5L654.5 742.8M658.5 723.7L656.7 725.8L658.2 730.2L659.9 729.8L664.6 730.9L666.0 735.0L666.0 736.4M660.2 722.1L663.3 725.8L665.5 728.9L669.2 735.0L669.2 735.9M661.4 740.7L660.4 737.1L666.0 736.4L669.2 735.9L669.2 739.7L666.3 741.1L664.1 742.9M656.7 749.2L659.5 750.3L660.1 749.6M672.7 756.3L674.3 758.0L678.5 757.0L681.9 755.5L683.2 752.6L686.3 752.8M725.9 763.5L725.9 773.7M644.0 723.0L643.5 725.1M600.2 717.4L602.7 719.8M483.9 698.7L485.3 703.6L481.2 705.1L478.0 709.0L472.6 710.7L472.6 713.3M472.6 712.5L465.0 712.5M472.6 713.3L472.6 715.6L467.0 715.6L467.0 720.1L465.3 721.0L465.3 724.0L458.6 724.0M472.6 713.3L479.2 717.4L489.4 724.4L492.7 726.7L494.4 727.9L497.5 727.2L507.6 720.1L504.2 718.3L503.4 714.9L504.2 710.1L503.4 707.9L501.4 703.6L500.0 701.2L501.9 695.2M503.4 707.9L504.8 705.1L506.8 702.5M529.6 705.3L529.6 722.8L529.6 726.3L527.9 726.3L527.9 727.2L514.4 720.1L512.7 721.0L507.6 720.1M529.6 722.8L549.8 722.8M476.3 717.4L477.9 732.4L478.4 734.2L466.7 735.4L459.4 733.0M494.4 727.9L494.4 733.3L487.7 735.0L486.5 735.0L480.6 738.0L478.0 742.8L473.8 743.3L473.0 747.4L474.6 752.5M466.7 735.4L468.0 739.5L464.2 739.2L459.1 739.5M468.0 739.5L473.8 743.3M462.0 742.3L464.2 739.2M465.0 745.5L469.9 746.0L467.9 748.5M469.9 746.0L473.0 747.4M482.6 751.4L482.8 744.4L478.0 742.8M482.8 744.4L487.0 741.7L488.9 741.9L489.4 749.8M488.9 741.9L491.2 739.9L493.4 740.7M490.0 749.6L490.0 745.2L488.9 741.9M491.2 739.9L487.7 735.0M512.7 721.0L513.6 725.4L513.6 731.9L510.3 737.3L499.2 738.5L493.4 740.7L491.9 749.3M501.9 751.8L506.8 749.0L510.3 741.9L511.4 738.8L510.3 737.3M527.9 727.2L527.9 733.8L525.4 738.5L526.1 741.9L519.5 745.2L513.6 747.6L512.7 743.6L511.4 738.8M552.5 729.8L549.1 736.2L546.9 740.2L544.8 744.4L543.2 746.8L548.1 752.2M528.3 745.7L533.9 744.3L541.5 740.2L544.8 744.4M526.1 741.9L528.3 745.7L533.7 751.4M560.4 741.1L559.7 742.1L561.8 745.2L568.5 746.8L563.5 751.5L558.4 753.0L556.7 760.7L557.5 762.2M558.4 753.0L551.6 753.7L548.1 752.2L544.8 752.8L545.7 757.8L544.8 761.0L551.1 764.1L553.6 766.8M549.1 736.2L551.6 735.7L555.2 735.9L559.1 739.3L560.4 739.3M558.0 741.9L560.4 741.1M518.8 753.9L525.4 753.0L533.7 751.4L539.6 753.9L537.4 761.6L536.7 766.3L539.4 772.3L535.4 773.6L535.7 778.6L537.7 781.0L533.0 778.6L527.9 776.9L524.5 776.9L524.5 780.3M539.6 753.9L544.8 752.8M537.4 761.6L538.9 761.1L544.8 761.0M538.9 761.1L539.4 763.2L538.9 766.3L536.7 766.3M508.1 768.8L515.4 768.7L517.1 772.0L524.2 770.9L524.5 776.9M508.0 768.5L513.2 766.2L517.4 761.0L518.8 753.9M505.9 765.4L511.7 762.4L509.8 755.9L503.9 755.8M509.8 755.9L514.7 756.7L513.6 747.6M503.9 757.8L506.4 757.8L506.4 755.9M507.3 787.6L511.0 787.9L518.6 787.9L526.9 788.3L524.5 780.3M521.2 796.0L521.2 801.0L521.2 807.6L516.1 807.0L515.2 807.9M521.2 796.0L522.9 796.0L522.9 789.5L526.9 788.3L530.1 788.6M521.2 801.0L526.2 801.9L530.6 802.5L533.0 798.9L537.1 796.4M530.1 788.6L534.0 794.4L537.1 796.4L540.3 796.7L542.3 794.8L543.2 792.1L543.0 787.2L538.8 784.8L536.2 785.5L533.0 788.8L530.1 788.6M538.8 784.8L543.7 782.0L543.0 774.2L539.4 772.3M546.4 777.9L555.7 776.0M543.0 774.2L544.8 774.4L546.4 777.9L547.9 785.5L547.0 787.4L545.4 782.7L543.7 782.0M540.3 796.7L541.5 802.8L543.0 804.8M533.3 809.8L535.5 808.1L537.1 809.8L535.0 811.6L533.3 809.8M539.8 802.8L541.5 803.2L541.3 805.4L539.8 805.0L539.8 802.8" fill="none" stroke="#e2e2e4" stroke-width="0.7" stroke-linejoin="round"/>
<path d="M277.0 672.2L278.2 676.6L277.9 682.8L277.7 687.7L278.5 689.8L280.7 692.6L281.7 694.7L283.8 698.5L287.3 699.4L289.6 702.1L293.6 701.7L299.7 704.2L304.3 704.2L304.3 703.3L307.1 703.3L309.8 705.4L310.4 707.1L312.7 708.2L313.9 706.8L315.5 706.8L317.4 709.4L318.7 710.7L319.3 712.6L322.1 713.4L322.5 711.6L322.8 709.9L325.3 708.5L327.8 707.1L330.2 707.3L332.7 707.8L334.4 708.0L335.5 708.0L335.2 706.4L336.0 706.1L339.3 705.7L342.1 706.9L344.3 706.4L346.3 708.2L346.3 709.9L347.6 711.9L347.9 713.3L349.1 714.6L350.1 714.8L350.7 713.6L350.9 711.6L349.9 709.0L348.8 705.9L349.3 703.3L352.6 700.7L354.5 699.4L356.7 698.2L358.3 697.3L358.0 696.2L357.2 694.2L358.3 692.2L359.0 690.7L360.8 689.4L360.8 687.4L363.3 686.8L365.0 685.9L367.4 685.3L366.3 683.6L367.1 681.9L369.9 680.3L372.4 679.7L372.4 678.9L371.1 677.6L371.1 674.8L368.8 674.2L367.4 675.8L366.9 677.2L365.1 678.6L365.0 678.9L359.7 678.9L357.0 680.5L356.2 681.7L352.6 681.9L352.6 683.0L350.9 684.2L346.8 685.3L345.8 684.3L346.8 682.8L347.1 678.9L345.1 677.0L343.5 676.0L341.0 674.0L336.9 672.6L335.2 673.0L333.1 672.6L330.2 672.0L326.6 671.4L325.8 671.0L325.8 670.1L325.8 671.0L279.8 671.0L279.5 671.8ZM246.8 618.5L240.0 617.3L231.6 615.8L226.5 614.6L220.6 613.3L216.3 614.9L211.4 616.4L208.7 619.7L204.5 622.4L207.0 624.4L208.7 626.1L211.6 626.4L212.1 628.1L208.2 628.7L204.5 628.4L201.1 630.1L203.7 633.1L209.6 632.8L213.0 633.1L213.0 635.8L209.6 636.9L206.7 637.1L204.5 639.8L205.4 641.1L207.0 643.6L211.3 644.9L211.3 648.1L216.3 648.4L219.7 647.9L218.9 650.8L214.7 653.5L211.3 654.9L206.5 658.0L209.1 657.5L213.0 656.4L217.2 654.7L220.6 651.6L224.8 647.9L227.3 644.9L228.2 642.3L231.6 641.8L229.0 646.7L234.1 644.4L237.5 642.3L241.7 644.9L246.8 644.9ZM224.0 651.1L227.7 650.1L226.8 652.3L224.5 652.8Z" fill="#7094f5" stroke="#7094f5" stroke-width="0.5" stroke-linejoin="round"/>
<path d="M206.5 658.0L202.8 659.9L199.4 661.5L194.4 662.9L190.1 663.5L186.7 664.2L186.7 664.6L190.1 664.0L194.4 663.4L199.4 662.1L202.8 660.6L206.5 658.5Z" fill="#b9c8f3" stroke="#b9c8f3" stroke-width="0.5" stroke-linejoin="round"/>
<path d="M223.8 726.0L225.1 726.7L223.9 728.1L223.4 726.8ZM219.7 723.5L220.5 724.0L219.9 724.0Z" fill="#e3e6ee" stroke="#e3e6ee" stroke-width="0.5" stroke-linejoin="round"/>
<path d="M510.2 677.0L508.3 678.1L508.3 679.9L510.0 681.8L511.2 684.3L514.1 685.5L518.1 688.5L517.9 689.1L515.9 688.3L515.4 689.3L514.7 689.3L513.7 688.7L512.5 687.7L511.2 686.9L508.5 685.5L506.3 683.9L505.1 681.8L502.9 679.9L500.2 681.0L499.3 680.2L499.0 678.9L499.3 677.9L501.7 677.2L504.9 676.8L508.0 676.2ZM501.7 687.7L503.4 687.7L503.4 690.1L501.7 690.1Z" fill="#3160d6" stroke="#3160d6" stroke-width="0.5" stroke-linejoin="round"/>
<path d="M508.5 693.1L513.7 692.5L512.9 695.6L508.5 693.8ZM477.0 659.1L478.0 658.4L477.9 657.7L476.8 656.3L474.8 656.1L473.5 657.9L475.0 658.9Z" fill="#f1f1f1" stroke="#dedee0" stroke-width="0.5" stroke-linejoin="round"/>
<path d="M602.7 719.8L603.9 720.6L606.3 721.2L604.1 722.2L605.7 724.2L607.4 724.9L609.5 724.6L610.1 722.8L610.3 724.6L610.5 728.1L611.2 731.6L612.5 735.0L613.9 738.5L615.6 741.1L616.7 745.2L618.4 746.6L619.6 745.4L621.0 744.7L622.3 743.1L622.3 741.1L623.0 738.0L623.0 734.2L626.6 732.1L629.4 728.9L631.1 727.2L634.0 726.0L634.5 723.8L637.9 723.1L637.6 718.7L636.5 716.0L639.2 715.3L643.5 717.2L641.6 719.8L644.0 723.0L645.3 719.4L647.5 716.5L648.4 714.3L651.8 712.3L651.9 711.4L649.7 709.4L647.2 709.6L643.0 712.3L642.5 714.0L637.9 714.2L637.6 712.0L636.4 712.3L636.2 714.9L629.4 713.1L624.4 711.6L622.8 710.5L624.4 707.9L620.6 705.7L621.0 703.6L620.0 703.4L621.8 699.8L619.3 697.9L617.6 697.9L613.4 695.0L611.7 696.6L612.5 699.5L612.3 702.7L614.7 704.0L613.4 706.4L612.2 708.3L610.5 710.3L608.8 712.2L605.7 712.9L606.6 716.2L607.4 718.3L603.7 718.7Z" fill="#cbd3fa" stroke="#cbd3fa" stroke-width="0.5" stroke-linejoin="round"/>
<path d="M680.4 795.7L684.9 793.4L688.6 792.5L692.9 791.6L694.2 787.6L696.6 785.8L699.1 782.9L702.2 781.9L704.7 783.4L706.4 783.4L707.3 780.3L708.6 779.3L711.6 777.6L711.5 778.8L716.0 778.9L718.8 778.9L717.4 781.2L716.6 783.8L719.1 785.1L723.0 788.1L725.5 788.1L726.9 783.8L726.9 780.0L728.4 776.5L730.1 780.0L730.6 782.7L733.1 783.8L734.3 788.1L734.8 790.6L738.5 792.8L740.6 796.6L742.8 799.2L746.3 802.3L747.0 807.2L746.2 812.4L744.5 815.7L743.1 818.0L741.1 822.8L740.9 824.8L737.4 825.7L734.8 827.9L732.6 826.3L730.1 827.3L725.9 826.1L723.8 823.8L722.5 821.1L721.1 821.1L720.8 818.6L720.4 816.1L719.9 819.5L717.4 819.5L715.7 817.3L714.0 815.7L709.8 813.3L705.6 813.7L700.5 814.8L697.1 816.1L696.3 817.8L690.3 817.8L687.0 819.9L683.6 819.7L681.9 818.6L683.1 813.9L681.9 810.5L680.5 805.9L679.2 802.8L679.5 800.5Z" fill="#d3d9fb" stroke="#d3d9fb" stroke-width="0.5" stroke-linejoin="round"/>
<path d="M732.1 831.1L735.2 831.9L738.2 831.5L737.7 836.2L735.2 837.0L733.1 834.7Z" fill="#e9e9ee" stroke="#e9e9ee" stroke-width="0.5" stroke-linejoin="round"/>
<path d="M477.7 667.9L481.4 666.8L484.3 666.6L487.8 666.4L489.7 665.5L488.7 664.8L490.2 662.3L487.8 661.4L487.3 660.0L487.0 658.6L485.3 657.5L484.6 655.6L482.3 656.8L481.4 657.0L481.9 658.9L482.4 659.6L482.1 660.7L479.7 660.7L480.2 661.9L480.4 663.0L478.5 664.1L480.2 664.6L482.3 664.8L480.2 665.5Z" fill="#d2d8f9" stroke="#d2d8f9" stroke-width="0.5" stroke-linejoin="round"/>
<path d="M331.1 675.6L334.4 673.6L336.5 672.2L340.2 671.8L342.6 673.2L343.3 675.8L340.2 676.0L337.7 675.2L333.6 675.6ZM338.0 685.1L340.0 684.9L340.7 680.9L342.6 677.4L341.0 677.2L338.3 678.9L337.7 679.9L338.3 682.8ZM343.5 677.0L348.4 677.0L350.9 678.9L350.1 679.9L348.1 682.4L346.8 682.6L345.1 681.3L345.3 678.6ZM345.3 685.3L349.3 685.7L352.6 683.4L350.1 683.4L346.8 684.3ZM351.4 682.2L356.7 681.9L357.0 680.7L354.2 681.1ZM536.6 686.7L534.9 685.9L534.5 683.5L535.7 681.6L536.1 679.5L537.6 678.3L539.3 675.7L541.1 675.5L544.2 676.6L542.3 678.1L544.3 680.2L547.0 678.9L549.1 678.5L546.5 676.4L550.8 674.7L553.8 674.2L552.0 676.4L550.4 678.3L552.0 680.2L554.7 682.0L557.5 684.1L557.5 686.1L552.5 687.3L549.1 686.5L546.9 685.1L544.0 685.1L540.6 686.5ZM566.8 677.9L570.2 675.7L573.6 675.1L577.0 675.7L577.0 678.3L574.1 679.9L572.4 680.4L573.3 683.0L575.3 683.5L576.5 686.1L576.8 689.1L578.3 691.1L578.3 694.4L575.3 695.6L572.4 694.6L570.2 693.8L570.1 691.5L570.7 688.7L571.9 688.3L569.4 685.5L567.7 683.0L567.3 680.6ZM586.3 677.2L589.7 675.7L591.4 677.9L588.8 681.0L586.3 679.9ZM662.9 664.8L665.8 663.7L670.0 659.6L673.1 655.4L671.7 655.4L668.3 660.3L665.0 663.0ZM541.1 761.0L544.7 758.9L545.2 761.8L544.0 763.8L541.5 763.3Z" fill="#fdfdfd" stroke="#dedee0" stroke-width="0.6"/>
</svg>
<!--MAPEND-->

<!-- table -->
<div class="t th" id="h1" style="left:924.36px;top:561.90px;transform:scaleX(0.9747)">Country</div>
<div class="t th" id="h2" style="left:1248.17px;top:561.90px;transform:scaleX(0.9729)">Traffic Share</div>
<div class="t th" id="h3" style="left:1683.58px;top:561.90px;transform:scaleX(0.9564)">Change</div>
<div class="hl" style="left:924px;top:595px;width:852px;background:#e3e4e7"></div>
<div class="hl" style="left:924px;top:654px;width:852px;background:#e3e4e7"></div>
<div class="hl" style="left:924px;top:711px;width:852px;background:#e3e4e7"></div>
<div class="hl" style="left:924px;top:769px;width:852px;background:#e3e4e7"></div>
<div class="hl" style="left:924px;top:827px;width:852px;background:#e3e4e7"></div>

<!--ROWS-->
<svg class="abs" style="left:924px;top:610.5px" width="21" height="21" viewBox="0 0 22 22"><defs><clipPath id="cit"><circle cx="11" cy="11" r="10.800"/></clipPath></defs><g clip-path="url(#cit)"><rect width="22" height="22" fill="#f4f4f4"/><rect width="7.500" height="22" fill="#5a9a46"/><rect x="14.500" width="7.500" height="22" fill="#d5232c"/></g></svg>
<div class="t td" id="cn0" style="left:955.66px;top:611.40px;transform:scaleX(0.9957)">Italy</div>
<div class="t td" id="sh0" style="left:1247.80px;top:611.40px;transform:scaleX(0.9328)">44.19%</div>
<div class="bar" style="top:614px"><i style="width:74.6px"></i></div>
<div class="t td" id="cv0" style="left:1753.40px;top:611.40px;transform:scaleX(1.0000)">-</div>
<svg class="abs" style="left:924px;top:668.0px" width="21" height="21" viewBox="0 0 22 22"><defs><clipPath id="cus"><circle cx="11" cy="11" r="10.800"/></clipPath></defs><g clip-path="url(#cus)"><rect width="22" height="22" fill="#f6f6f6"/><g fill="#d8303c"><rect y="2.500" x="10" width="12" height="2.400"/><rect y="7.300" x="10" width="12" height="2.400"/><rect y="12.100" width="22" height="2.400"/><rect y="16.900" width="22" height="2.400"/><rect y="21.200" width="22" height="1"/></g><rect width="10.500" height="11.500" fill="#3c4f9e"/></g></svg>
<div class="t td" id="cn1" style="left:956.34px;top:668.20px;transform:scaleX(0.9589)">United States</div>
<div class="t td" id="sh1" style="left:1247.69px;top:668.20px;transform:scaleX(0.9333)">32.20%</div>
<div class="bar" style="top:672px"><i style="width:54.6px"></i></div>
<svg class="abs" style="left:1653.7px;top:670.6px" width="13" height="16" viewBox="0 0 13 16"><path d="M6.500 15V1.500M1 7L6.500 1.500L12 7" fill="none" stroke="#48a84c" stroke-width="1.700"/></svg>
<div class="t td green" id="cv1" style="left:1678.97px;top:668.20px;transform:scaleX(0.9363)">315.51%</div>
<svg class="abs" style="left:924px;top:725.5px" width="21" height="21" viewBox="0 0 22 22"><defs><clipPath id="cin"><circle cx="11" cy="11" r="10.800"/></clipPath></defs><g clip-path="url(#cin)"><rect width="22" height="22" fill="#f4f4f4"/><rect width="22" height="7.300" fill="#f0953a"/><rect y="14.700" width="22" height="7.300" fill="#5c9a45"/><circle cx="11" cy="11" r="2.400" fill="#3d4f9c"/></g></svg>
<div class="t td" id="cn2" style="left:956.04px;top:724.60px;transform:scaleX(0.9655)">India</div>
<div class="t td" id="sh2" style="left:1247.58px;top:724.60px;transform:scaleX(0.9209)">7.31%</div>
<div class="bar" style="top:730px"><i style="width:13.0px"></i></div>
<svg class="abs" style="left:1665.3px;top:728.0px" width="13" height="16" viewBox="0 0 13 16"><path d="M6.500 0.500V14M1 8.500L6.500 14L12 8.500" fill="none" stroke="#e2432f" stroke-width="1.700"/></svg>
<div class="t td red" id="cv2" style="left:1690.66px;top:724.60px;transform:scaleX(0.9342)">41.37%</div>
<svg class="abs" style="left:924px;top:783.0px" width="21" height="21" viewBox="0 0 22 22"><defs><clipPath id="cau"><circle cx="11" cy="11" r="10.800"/></clipPath></defs><g clip-path="url(#cau)"><rect width="22" height="22" fill="#2f4c9e"/><path d="M0 0L11 11M11 0L0 11" stroke="#eee" stroke-width="2"/><path d="M5.500 0V11M0 5.500H11" stroke="#eee" stroke-width="3"/><path d="M5.500 0V11M0 5.500H11" stroke="#d8303c" stroke-width="1.400"/><circle cx="6" cy="16" r="1.800" fill="#eee"/><circle cx="16" cy="5" r="1.100" fill="#eee"/><circle cx="19" cy="10" r="1.100" fill="#eee"/><circle cx="15" cy="12" r="1.100" fill="#eee"/><circle cx="16.500" cy="17.500" r="1.100" fill="#eee"/></g></svg>
<div class="t td" id="cn3" style="left:957.85px;top:783.00px;transform:scaleX(0.9530)">Australia</div>
<div class="t td" id="sh3" style="left:1247.63px;top:783.00px;transform:scaleX(0.9207)">5.94%</div>
<div class="bar" style="top:787px"><i style="width:10.7px"></i></div>
<svg class="abs" style="left:1677.5px;top:785.4px" width="13" height="16" viewBox="0 0 13 16"><path d="M6.500 0.500V14M1 8.500L6.500 14L12 8.500" fill="none" stroke="#e2432f" stroke-width="1.700"/></svg>
<div class="t td red" id="cv3" style="left:1701.89px;top:783.00px;transform:scaleX(0.9319)">3.48%</div>
<svg class="abs" style="left:924px;top:841.0px" width="21" height="21" viewBox="0 0 22 22"><defs><clipPath id="cgb"><circle cx="11" cy="11" r="10.800"/></clipPath></defs><g clip-path="url(#cgb)"><rect width="22" height="22" fill="#33499a"/><path d="M0 0L22 22M22 0L0 22" stroke="#f2f2f2" stroke-width="4"/><path d="M0 0L22 22M22 0L0 22" stroke="#d8303c" stroke-width="1.400"/><path d="M11 0V22M0 11H22" stroke="#f2f2f2" stroke-width="6.500"/><path d="M11 0V22M0 11H22" stroke="#d8303c" stroke-width="3.600"/></g></svg>
<div class="t td" id="cn4" style="left:956.26px;top:841.10px;transform:scaleX(0.9726)">United Kingdom</div>
<div class="t td" id="sh4" style="left:1247.63px;top:841.10px;transform:scaleX(0.9207)">5.00%</div>
<div class="bar" style="top:845px"><i style="width:9.2px"></i></div>
<svg class="abs" style="left:1665.3px;top:843.5px" width="13" height="16" viewBox="0 0 13 16"><path d="M6.500 0.500V14M1 8.500L6.500 14L12 8.500" fill="none" stroke="#e2432f" stroke-width="1.700"/></svg>
<div class="t td red" id="cv4" style="left:1691.01px;top:841.10px;transform:scaleX(0.9284)">12.33%</div>
<!--ROWSEND-->

<div class="purple" style="left:899px;top:528px;width:888px;height:366px"></div>

<svg class="abs" style="left:1509px;top:916px" width="24" height="26" viewBox="0 0 24 26"><rect x="5" y="10.500" width="14" height="12.500" rx="2" fill="none" stroke="#2d5bd3" stroke-width="2"/><path d="M8.300 10.500V7.500a3.700 3.700 0 0 1 7.400 0V10.500" fill="none" stroke="#2d5bd3" stroke-width="2"/></svg>
<div class="t" id="seemore" style="left:1541.36px;top:918.00px;font-size:21px;font-weight:bold;color:#2d5bd3;transform:scaleX(1.0441)">See more countries</div>

<!-- logo -->
<svg class="abs" style="left:0;top:790px" width="260" height="213" viewBox="0 0 1224 1003"><circle cx="494" cy="508" r="399" fill="#7a33fb"/><g fill="none" stroke="#19f2fa" stroke-width="35" stroke-linejoin="miter"><path d="M307 232H417V482H307Z"/><path d="M417 530V672H680V783H407L310 690V592L537 383H680V482H445"/></g></svg>
</body>
</html>
